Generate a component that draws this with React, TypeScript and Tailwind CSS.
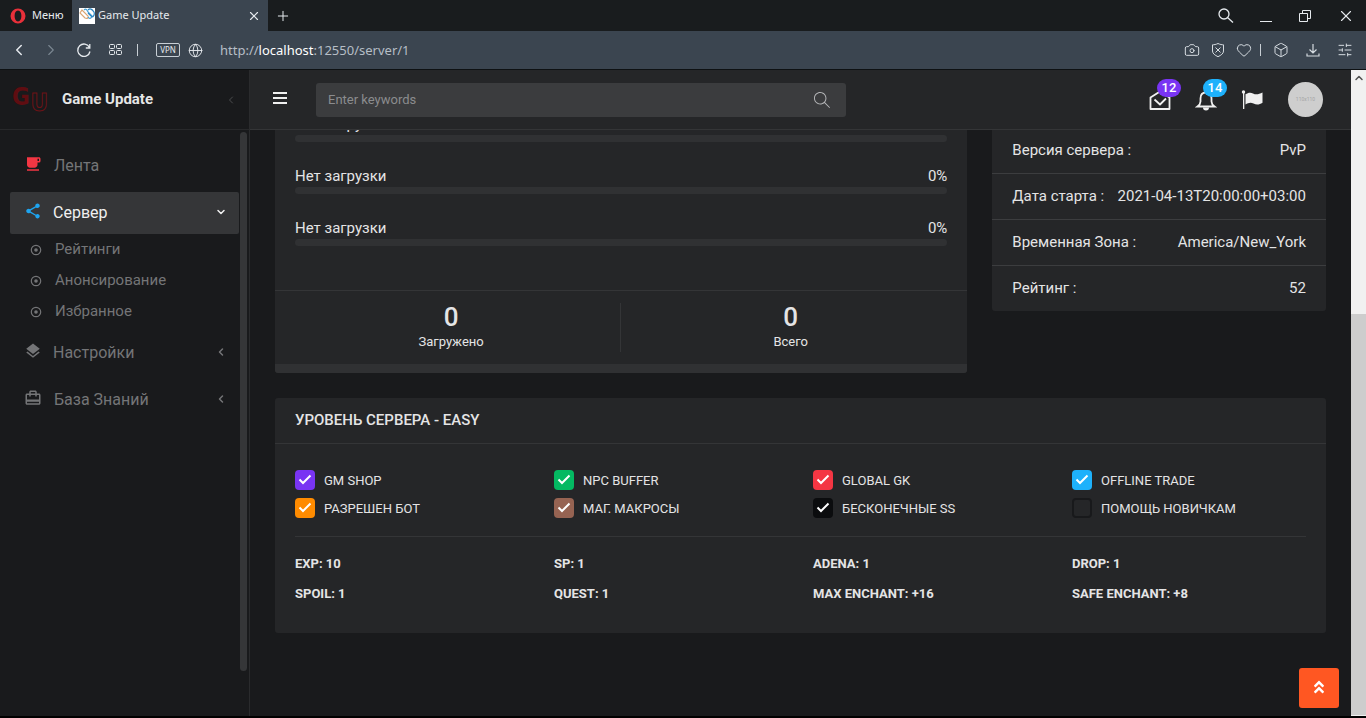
import React, { useState } from 'react';
import { X, Plus, ChevronLeft, ChevronRight, Globe, Camera, Heart, Box, SlidersHorizontal } from 'lucide-react';
import { FaAngleDoubleUp } from 'react-icons/fa';
import { MdLocalCafe, MdShare, MdLayers, MdCardTravel } from 'react-icons/md';
import { SlMagnifier } from 'react-icons/sl';

const downloads = [
  { name: 'Нет загрузки', percent: 0 },
  { name: 'Нет загрузки', percent: 0 },
  { name: 'Нет загрузки', percent: 0 }
];

const serverInfo = [
  { label: 'Версия сервера :', value: 'PvP' },
  { label: 'Дата старта :', value: '2021-04-13T20:00:00+03:00' },
  { label: 'Временная Зона :', value: 'America/New_York' },
  { label: 'Рейтинг :', value: '52' }
];

const options = [
  { id: 'gm-shop', label: 'GM SHOP', color: 'checked:bg-[#7934f3]', on: true },
  { id: 'npc-buffer', label: 'NPC BUFFER', color: 'checked:bg-[#04b962]', on: true },
  { id: 'global-gk', label: 'GLOBAL GK', color: 'checked:bg-[#f43643]', on: true },
  { id: 'offline-trade', label: 'OFFLINE TRADE', color: 'checked:bg-[#1eb1fb]', on: true },
  { id: 'bot', label: 'РАЗРЕШЕН БОТ', color: 'checked:bg-[#ff8b00]', on: true },
  { id: 'macros', label: 'МАГ. МАКРОСЫ', color: 'checked:bg-[#966352]', on: true },
  { id: 'endless-ss', label: 'БЕСКОНЕЧНЫЕ SS', color: 'checked:bg-[#0b0c0e]', on: true },
  { id: 'newbie-help', label: 'ПОМОЩЬ НОВИЧКАМ', color: 'checked:bg-[#0b0c0e]', on: false }
];

const rates = [
  'EXP: 10',
  'SP: 1',
  'ADENA: 1',
  'DROP: 1',
  'SPOIL: 1',
  'QUEST: 1',
  'MAX ENCHANT: +16',
  'SAFE ENCHANT: +8'
];

const subItems = ['Рейтинги', 'Анонсирование', 'Избранное'];

const BrowserChrome: React.FC = () => (
  <div className="shrink-0 font-['Noto_Sans',sans-serif] text-[#e6eaee]">
    <div className="flex h-[31px] items-stretch bg-[#191c1e]">
      <button className="flex w-[72px] items-center gap-1.5 pl-2.5 text-[11px]">
        <svg className="size-4" viewBox="0 0 16 16" aria-hidden="true">
          <path
            fillRule="evenodd"
            fill="#e8303a"
            d="M8 .5a7.5 7.5 0 1 0 0 15a7.5 7.5 0 1 0 0-15zM8 2.600c2.200 0 3.400 2.400 3.400 5.400s-1.200 5.400-3.400 5.400s-3.400-2.400-3.400-5.400s1.200-5.400 3.400-5.400z"
          />
        </svg>
        Меню
      </button>
      <div className="flex w-[196px] items-center bg-[#3b4550] px-[7px] text-[11px]">
        <svg className="size-4 shrink-0" viewBox="0 0 16 16" aria-hidden="true">
          <rect width="16" height="16" fill="#fff" />
          <g fill="none" strokeWidth="1.2">
            <path d="M1 5l2-3 6 6c1 2-1 3-3 2z" stroke="#dba672" />
            <path d="M5 2c2-2 3 0 4 2l4 4c-1 3-3 3-4 1" stroke="#4aa3d6" />
            <path d="M9 2c2-2 4-1 6 2c1 3-1 5-2 5L9 5" stroke="#2a86c4" />
          </g>
        </svg>
        <span className="ml-[3px] grow">Game Update</span>
        <button aria-label="Close tab">
          <X className="size-3.5" strokeWidth={2} />
        </button>
      </div>
      <button aria-label="New tab" className="ml-[7px]">
        <Plus className="size-4" strokeWidth={1.5} />
      </button>
      <div className="ml-auto flex items-center pr-[11px]">
        <button aria-label="Search tabs" className="mr-[26px]">
          <svg className="size-4" viewBox="0 0 16 16" fill="none" stroke="currentColor" strokeWidth="1.3" aria-hidden="true">
            <circle cx="6" cy="6" r="5" />
            <path d="M9.5 9.500l5.500 5" />
          </svg>
        </button>
        <button aria-label="Minimize" className="mr-[26px]">
          <svg className="h-4 w-3" viewBox="0 0 12 16" aria-hidden="true">
            <path d="M0 13.500h12" stroke="currentColor" />
          </svg>
        </button>
        <button aria-label="Restore" className="mr-[25px]">
          <svg className="size-3.5" viewBox="0 0 14 14" fill="none" stroke="currentColor" aria-hidden="true">
            <path d="M1.500 4.500h8v8h-8zM4.500 4.500v-3h8v8h-3" />
          </svg>
        </button>
        <button aria-label="Close window">
          <X className="size-[18px]" strokeWidth={1.5} />
        </button>
      </div>
    </div>
    <div className="flex h-[39px] items-center border-b border-[#0e1113] bg-[#3b4550] pr-[13px] pl-2.5">
      <button aria-label="Back">
        <ChevronLeft className="size-[18px]" strokeWidth={2} />
      </button>
      <button aria-label="Forward" className="ml-3.5 text-[#7b8791]">
        <ChevronRight className="size-[18px]" strokeWidth={1.5} />
      </button>
      <button aria-label="Reload" className="ml-4">
        <svg className="size-4" viewBox="0 0 16 16" fill="none" stroke="currentColor" strokeWidth="1.3" aria-hidden="true">
          <path d="M13.500 5.500A6.200 6.200 0 1 0 14 9.500M13.800 2v4h-4" />
        </svg>
      </button>
      <button aria-label="Speed dial" className="ml-4">
        <svg className="size-4" viewBox="0 0 16 16" fill="none" stroke="currentColor" aria-hidden="true">
          <rect x="1.500" y="2.500" width="5" height="4" rx="1" />
          <rect x="8.500" y="2.500" width="5" height="4" rx="1" />
          <rect x="1.500" y="8.500" width="5" height="4" rx="1" />
          <rect x="8.500" y="8.500" width="5" height="4" rx="1" />
        </svg>
      </button>
      <span className="ml-[13px] h-3 w-px bg-[#c8cfd5]" />
      <span className="ml-[18px] flex h-3.5 w-6 items-center justify-center rounded-xs border border-[#c8cfd5] text-[8px]">
        VPN
      </span>
      <Globe className="ml-2 size-[15px]" strokeWidth={1.5} />
      <a href="http://localhost:12550/server/1" className="ml-[17px] pt-0.5 text-[13px] text-[#b6bec6]">
        http://<span className="text-white">localhost</span>:12550/server/1
      </a>
      <div className="ml-auto flex items-center text-[#d5dbe0]">
        <Camera className="size-4" strokeWidth={1.5} />
        <svg className="ml-2.5 size-4" viewBox="0 0 16 16" fill="none" stroke="currentColor" aria-hidden="true">
          <path d="M8 1.500C10 2.500 12 2.800 13.500 2.800V9c0 2.700-2.500 4.200-5.500 5.700C5 13.200 2.500 11.700 2.500 9V2.800C4 2.800 6 2.500 8 1.500zM5.500 5.500l5 5M10.500 5.500l-5 5" />
        </svg>
        <Heart className="ml-2.5 size-4" strokeWidth={1.5} />
        <span className="ml-2 h-3 w-px bg-[#c8cfd5]" />
        <Box className="ml-3 size-4" strokeWidth={1.5} />
        <svg className="ml-4 size-4" viewBox="0 0 16 16" fill="none" stroke="currentColor" strokeWidth="1.2" aria-hidden="true">
          <path d="M8 2v8.500M4.500 7.500L8 11l3.500-3.500M2 11.500V14h12v-2.500" />
        </svg>
        <SlidersHorizontal className="ml-4 size-4" strokeWidth={1.5} />
      </div>
    </div>
  </div>
);

const Sidebar: React.FC = () => (
  <aside className="flex w-[250px] shrink-0 flex-col border-r border-[#2a2b2d] bg-[#191a1c]">
    <div className="flex h-[60px] shrink-0 items-center border-b border-[#28292b] px-3">
      <span
        className="flex w-9 items-center justify-between font-['Liberation_Sans_Narrow','DejaVu_Sans_Condensed',sans-serif] text-2xl leading-none font-bold text-[#5f0d11]"
        aria-hidden="true"
      >
        <span className="-mt-1.5">G</span>
        <span className="mt-1.5 text-transparent [-webkit-text-stroke:1px_#6b1216]">U</span>
      </span>
      <a href="#" className="ml-3.5 text-[15px] font-bold text-[#e6e6e6]">Game Update</a>
      <ChevronLeft className="ml-auto size-3 text-[#5c5d5f]" strokeWidth={1.5} />
    </div>
    <div className="flex min-h-0 grow">
      <nav className="grow pt-[15px] pl-2.5 text-base text-[#747577]">
        <a href="#" className="mb-[5px] flex h-[42px] items-center px-3.5">
          <MdLocalCafe className="mr-3 mb-1 size-[18px] text-[#f43643]" />
          Лента
        </a>
        <a href="#" className="flex h-[42px] items-center rounded-xs bg-[#353638] pr-3 pl-3.5 text-[#f0f0f0]">
          <MdShare className="mr-[11px] mb-1 size-[18px] text-[#1ea5f0]" />
          Сервер
          <ChevronRight className="mb-0.5 ml-auto size-3 rotate-90" strokeWidth={3} />
        </a>
        <ul className="mb-[5px] text-[15px]">
          {subItems.map((item) => (
            <li key={item}>
              <a href="#" className="flex h-[31px] items-center pl-5">
                <svg className="mr-[13px] size-3" viewBox="0 0 12 12" aria-hidden="true">
                  <circle cx="6" cy="6" r="4.700" fill="none" stroke="currentColor" strokeWidth="1.2" />
                  <circle cx="6" cy="6" r="1.800" fill="currentColor" />
                </svg>
                {item}
              </a>
            </li>
          ))}
        </ul>
        <a href="#" className="mb-[5px] flex h-[42px] items-center pr-3 pl-3.5">
          <MdLayers className="mr-[11px] mb-1 size-[18px]" />
          Настройки
          <ChevronLeft className="mb-0.5 ml-auto size-3" strokeWidth={3} />
        </a>
        <a href="#" className="flex h-[42px] items-center pr-3 pl-3.5">
          <MdCardTravel className="mr-3 mb-1 size-[18px]" />
          База Знаний
          <ChevronLeft className="mb-0.5 ml-auto size-3" strokeWidth={3} />
        </a>
      </nav>
      <div className="mt-0.5 mr-0.5 mb-[45px] ml-px w-[7px] shrink-0 rounded-md bg-[#353638]" />
    </div>
  </aside>
);

const Header: React.FC = () => (
  <header className="flex h-[60px] shrink-0 items-center border-b border-[#343537] bg-[#252628] pr-7 pl-[23px] text-[#f0f0f0]">
    <button aria-label="Toggle menu" className="pb-1">
      <svg className="h-3 w-3.5" viewBox="0 0 14 12" fill="currentColor" aria-hidden="true">
        <path d="M0 0h14v2H0zM0 5h14v2H0zM0 10h14v2H0z" />
      </svg>
    </button>
    <form className="ml-[29px] flex h-[34px] w-[530px] items-center rounded-[3px] bg-[#3b3c3e] pr-4 pl-3" onSubmit={(e) => e.preventDefault()}>
      <input
        type="text"
        aria-label="Search"
        placeholder="Enter keywords"
        className="min-w-0 grow bg-transparent text-[13px] outline-none placeholder:text-[#8b8c8e]"
      />
      <button aria-label="Search">
        <SlMagnifier className="size-4 text-[#b4b5b7]" />
      </button>
    </form>
    <div className="ml-auto flex items-center">
      <button aria-label="Messages" className="relative mr-6">
        <svg className="size-[22px]" viewBox="0 0 22 22" fill="none" stroke="currentColor" strokeWidth="1.8" strokeLinejoin="round" aria-hidden="true">
          <path d="M1.500 8.500L11 2.500l9.500 6V20h-19zM5.500 10.500l5.500 5 6-6" />
        </svg>
        <span className="absolute -top-2.5 left-2 flex h-[18px] w-6 items-center justify-center rounded-full bg-[#7934f3] text-[13px] font-medium text-white">12</span>
      </button>
      <button aria-label="Notifications" className="relative mr-6">
        <svg className="size-[22px]" viewBox="0 0 22 22" fill="none" stroke="currentColor" strokeWidth="1.8" aria-hidden="true">
          <path d="M2.500 17.500h17c-2-1.500-3-3-3-5V9.500c0-3.500-2-6-5.500-6s-5.500 2.500-5.500 6v3c0 2-1 3.500-3 5z" />
          <path d="M8 18.500h6a3 3 0 0 1-6 0z" fill="currentColor" stroke="none" />
        </svg>
        <span className="absolute -top-2.5 left-2 flex h-[18px] w-6 items-center justify-center rounded-full bg-[#1eb1fb] text-[13px] font-medium text-white">14</span>
      </button>
      <button aria-label="Language" className="mr-[25px]">
        <svg className="size-[22px]" viewBox="0 0 22 22" fill="currentColor" aria-hidden="true">
          <circle cx="2.500" cy="3" r="1.700" />
          <path d="M2 3h1.300v17H2z" />
          <path d="M4.500 5.300C7 3.600 9.500 3 12 4.500c3 1.600 6 .8 9.500-1v10.300c-3 2-6 2.400-9 .8c-2.800-1.500-5.500-.6-8 .9z" />
        </svg>
      </button>
      <button aria-label="Profile" className="flex size-[35px] items-center justify-center rounded-full bg-[#cecece] text-[5px] text-[#a5a5a5]">
        110x110
      </button>
    </div>
  </header>
);

const DownloadsCard: React.FC = () => (
  <section className="col-span-8 overflow-hidden rounded-[3px] bg-[#252628]">
    <div className="px-5 pb-11">
      {downloads.map((item, index) => (
        <div key={index} className="mb-[25px] last:mb-0">
          <div className="flex h-5 items-start justify-between text-[15px] leading-[18px]">
            <span>{item.name}</span>
            <span>{item.percent}%</span>
          </div>
          <div className="h-[7px] overflow-hidden rounded-full bg-[#303133]">
            <div className="h-full bg-[#14abef]" style={{ width: `${item.percent}%` }} />
          </div>
        </div>
      ))}
    </div>
    <div className="grid grid-cols-2 border-t border-[#343537] px-[7px] py-3 text-center">
      <div className="border-r border-[#343537]">
        <div className="text-[26px] leading-7 font-medium">0</div>
        <div className="text-[13px] leading-[21px]">Загружено</div>
      </div>
      <div>
        <div className="text-[26px] leading-7 font-medium">0</div>
        <div className="text-[13px] leading-[21px]">Всего</div>
      </div>
    </div>
    <div className="h-[9px] bg-[#303133]" />
  </section>
);

const ServerInfoCard: React.FC = () => (
  <section className="rounded-[3px] bg-[#252628]">
    <dl className="text-[15px]">
      {serverInfo.map((row) => (
        <div key={row.label} className="flex h-[46px] items-center justify-between border-[#3c3d3f] px-5 not-first:border-t">
          <dt>{row.label}</dt>
          <dd>{row.value}</dd>
        </div>
      ))}
    </dl>
  </section>
);

const ServerLevelCard: React.FC = () => {
  const [checked, setChecked] = useState(options.map((option) => option.on));

  const toggle = (index: number) => {
    setChecked(checked.map((value, i) => (i === index ? !value : value)));
  };

  return (
    <section className="mt-[25px] rounded-[3px] bg-[#252628]">
      <h2 className="flex h-[46px] items-center border-b border-[#343537] px-5 text-[15px] font-medium">
        УРОВЕНЬ СЕРВЕРА - EASY
      </h2>
      <div className="px-5 pt-[26px] pb-6">
        <div className="grid grid-cols-4 gap-x-[25px] gap-y-2">
          {options.map((option, index) => (
            <label key={option.id} htmlFor={option.id} className="flex h-5 items-center gap-[9px] text-[13px] leading-5">
              <span className="grid size-5 place-items-center">
                <input
                  id={option.id}
                  type="checkbox"
                  checked={checked[index]}
                  onChange={() => toggle(index)}
                  className={`peer col-start-1 row-start-1 size-5 appearance-none rounded-sm border-2 border-[#18191b] checked:border-0 ${option.color}`}
                />
                <svg
                  className="pointer-events-none invisible col-start-1 row-start-1 size-5 text-white peer-checked:visible"
                  viewBox="0 0 20 20"
                  fill="none"
                  stroke="currentColor"
                  strokeWidth="2"
                  aria-hidden="true"
                >
                  <path d="M4.500 9.500L8 13l7.500-7.500" />
                </svg>
              </span>
              <span className="pt-0.5">{option.label}</span>
            </label>
          ))}
        </div>
        <hr className="mt-[18px] mb-3 border-[#343537]" />
        <div className="grid grid-cols-4 gap-x-[25px] text-[13px] leading-[30px] font-bold">
          {rates.map((rate) => (
            <div key={rate}>{rate}</div>
          ))}
        </div>
      </div>
    </section>
  );
};

export default function App() {
  return (
    <div className="flex h-screen flex-col overflow-hidden border-b-2 border-black bg-[#191a1c] font-[Roboto,sans-serif] text-[#e4e4e5]">
      <BrowserChrome />
      <div className="flex min-h-0 grow">
        <Sidebar />
        <div className="flex min-w-0 grow flex-col">
          <Header />
          <main className="min-h-0 grow overflow-hidden px-[25px]">
            {/* content is scrolled a little under the header */}
            <div className="-mt-[15px]">
              <div className="grid grid-cols-12 gap-[25px]">
                <DownloadsCard />
                <div className="col-span-4 pt-3">
                  <ServerInfoCard />
                </div>
              </div>
              <ServerLevelCard />
            </div>
          </main>
        </div>
        <div className="flex w-[15px] shrink-0 flex-col bg-[#f1f1f1]">
          <ChevronLeft className="mx-auto mt-0.5 size-3 rotate-90 text-[#505050]" strokeWidth={3} />
          <div className="mt-auto mb-px h-[62%] bg-[#cdcdcd]" />
        </div>
      </div>
      <button
        aria-label="Back to top"
        className="fixed right-[27px] bottom-2.5 flex size-10 items-center justify-center rounded-[3px] bg-[#ff5722] pb-0.5 text-white"
      >
        <FaAngleDoubleUp className="size-4" />
      </button>
    </div>
  );
}
